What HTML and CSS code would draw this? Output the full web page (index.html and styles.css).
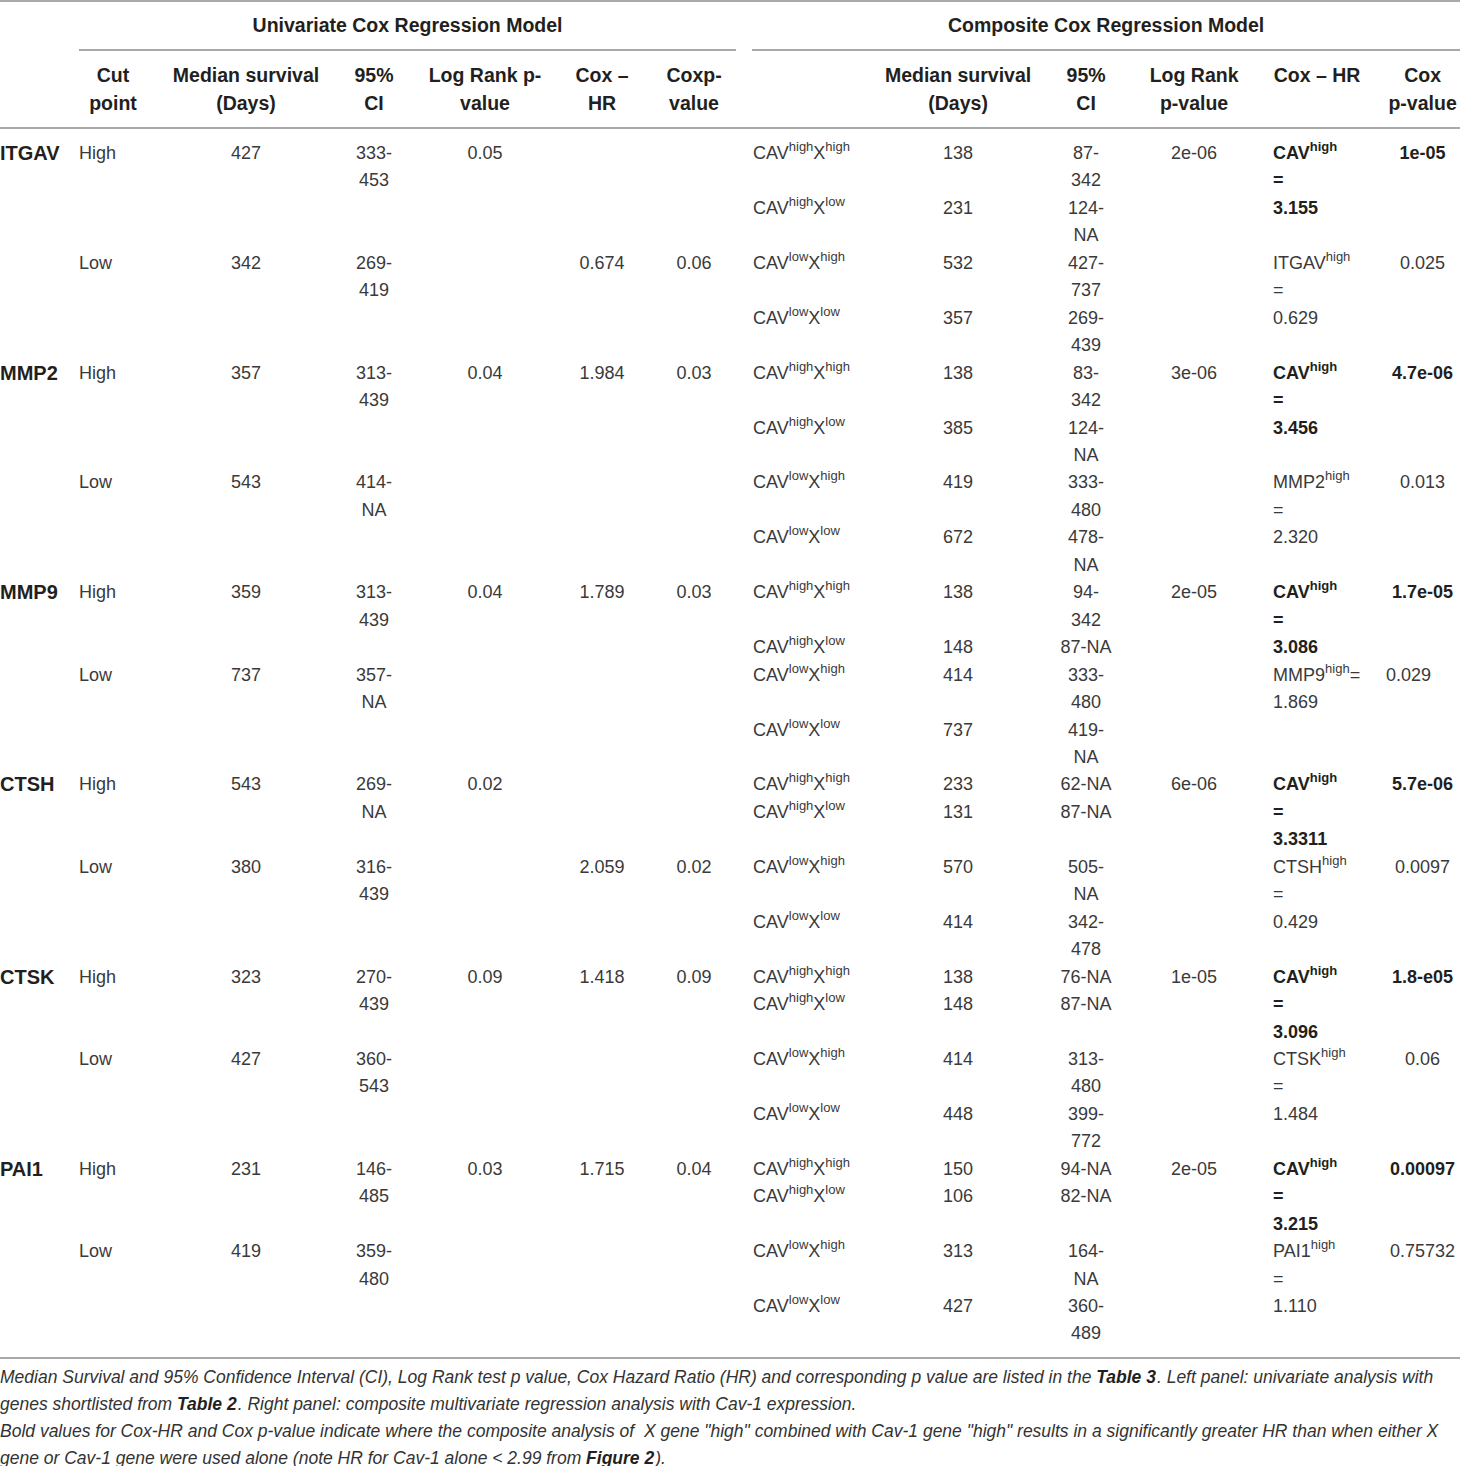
FILE: index.html
```html
<html>
<head>
    <title>Table 3 - Cox Regression Models</title>
    <meta charset="utf-8"
          name="viewport"
          content="width=device-width, initial-scale=1.0" />
    <link rel="stylesheet" href="styles.css">
</head>
<body>
    <table class="results">
        <colgroup>
            <col class="c-gene">
            <col class="c-cut">
            <col class="c-med">
            <col class="c-ci">
            <col class="c-lr">
            <col class="c-hr">
            <col class="c-p">
            <col class="c-name">
            <col class="c-med2">
            <col class="c-ci2">
            <col class="c-lr2">
            <col class="c-hr2">
            <col class="c-p2">
        </colgroup>
        <thead>
            <tr class="group">
                <th></th>
                <th colspan="6"><div class="rule left">Univariate Cox Regression Model</div></th>
                <th colspan="6"><div class="rule right">Composite Cox Regression Model</div></th>
            </tr>
            <tr class="cols">
                <th></th>
                <th>Cut<br>point</th>
                <th>Median survival<br>(Days)</th>
                <th>95%<br>CI</th>
                <th>Log Rank p-<br>value</th>
                <th>Cox –<br>HR</th>
                <th>Coxp-<br>value</th>
                <th></th>
                <th>Median survival<br>(Days)</th>
                <th>95%<br>CI</th>
                <th>Log Rank<br>p-value</th>
                <th>Cox – HR</th>
                <th>Cox<br>p-value</th>
            </tr>
        </thead>
        <tbody>
            <!-- ITGAV -->
            <tr>
                <td class="gene" rowspan="4">ITGAV</td>
                <td class="cut" rowspan="2">High</td>
                <td rowspan="2">427</td>
                <td rowspan="2">333-<br>453</td>
                <td rowspan="2">0.05</td>
                <td rowspan="2"></td>
                <td rowspan="2"></td>
                <td class="name">CAV<sup>high</sup>X<sup>high</sup></td>
                <td>138</td>
                <td>87-<br>342</td>
                <td rowspan="4">2e-06</td>
                <td class="hr strong" rowspan="2">CAV<sup>high</sup><br>=<br>3.155</td>
                <td class="strong" rowspan="2">1e-05</td>
            </tr>
            <tr>
                <td class="name">CAV<sup>high</sup>X<sup>low</sup></td>
                <td>231</td>
                <td>124-<br>NA</td>
            </tr>
            <tr>
                <td class="cut" rowspan="2">Low</td>
                <td rowspan="2">342</td>
                <td rowspan="2">269-<br>419</td>
                <td rowspan="2"></td>
                <td rowspan="2">0.674</td>
                <td rowspan="2">0.06</td>
                <td class="name">CAV<sup>low</sup>X<sup>high</sup></td>
                <td>532</td>
                <td>427-<br>737</td>
                <td class="hr" rowspan="2">ITGAV<sup>high</sup><br>=<br>0.629</td>
                <td rowspan="2">0.025</td>
            </tr>
            <tr>
                <td class="name">CAV<sup>low</sup>X<sup>low</sup></td>
                <td>357</td>
                <td>269-<br>439</td>
            </tr>

            <!-- MMP2 -->
            <tr>
                <td class="gene" rowspan="4">MMP2</td>
                <td class="cut" rowspan="2">High</td>
                <td rowspan="2">357</td>
                <td rowspan="2">313-<br>439</td>
                <td rowspan="2">0.04</td>
                <td rowspan="2">1.984</td>
                <td rowspan="2">0.03</td>
                <td class="name">CAV<sup>high</sup>X<sup>high</sup></td>
                <td>138</td>
                <td>83-<br>342</td>
                <td rowspan="4">3e-06</td>
                <td class="hr strong" rowspan="2">CAV<sup>high</sup><br>=<br>3.456</td>
                <td class="strong" rowspan="2">4.7e-06</td>
            </tr>
            <tr>
                <td class="name">CAV<sup>high</sup>X<sup>low</sup></td>
                <td>385</td>
                <td>124-<br>NA</td>
            </tr>
            <tr>
                <td class="cut" rowspan="2">Low</td>
                <td rowspan="2">543</td>
                <td rowspan="2">414-<br>NA</td>
                <td rowspan="2"></td>
                <td rowspan="2"></td>
                <td rowspan="2"></td>
                <td class="name">CAV<sup>low</sup>X<sup>high</sup></td>
                <td>419</td>
                <td>333-<br>480</td>
                <td class="hr" rowspan="2">MMP2<sup>high</sup><br>=<br>2.320</td>
                <td rowspan="2">0.013</td>
            </tr>
            <tr>
                <td class="name">CAV<sup>low</sup>X<sup>low</sup></td>
                <td>672</td>
                <td>478-<br>NA</td>
            </tr>

            <!-- MMP9 -->
            <tr>
                <td class="gene" rowspan="4">MMP9</td>
                <td class="cut" rowspan="2">High</td>
                <td rowspan="2">359</td>
                <td rowspan="2">313-<br>439</td>
                <td rowspan="2">0.04</td>
                <td rowspan="2">1.789</td>
                <td rowspan="2">0.03</td>
                <td class="name">CAV<sup>high</sup>X<sup>high</sup></td>
                <td>138</td>
                <td>94-<br>342</td>
                <td rowspan="4">2e-05</td>
                <td class="hr strong" rowspan="2">CAV<sup>high</sup><br>=<br>3.086</td>
                <td class="strong" rowspan="2">1.7e-05</td>
            </tr>
            <tr>
                <td class="name">CAV<sup>high</sup>X<sup>low</sup></td>
                <td>148</td>
                <td>87-NA</td>
            </tr>
            <tr>
                <td class="cut" rowspan="2">Low</td>
                <td rowspan="2">737</td>
                <td rowspan="2">357-<br>NA</td>
                <td rowspan="2"></td>
                <td rowspan="2"></td>
                <td rowspan="2"></td>
                <td class="name">CAV<sup>low</sup>X<sup>high</sup></td>
                <td>414</td>
                <td>333-<br>480</td>
                <td class="hr" rowspan="2">MMP9<sup>high</sup>=<br>1.869</td>
                <td class="shift" rowspan="2">0.029</td>
            </tr>
            <tr>
                <td class="name">CAV<sup>low</sup>X<sup>low</sup></td>
                <td>737</td>
                <td>419-<br>NA</td>
            </tr>

            <!-- CTSH -->
            <tr>
                <td class="gene" rowspan="4">CTSH</td>
                <td class="cut" rowspan="2">High</td>
                <td rowspan="2">543</td>
                <td rowspan="2">269-<br>NA</td>
                <td rowspan="2">0.02</td>
                <td rowspan="2"></td>
                <td rowspan="2"></td>
                <td class="name">CAV<sup>high</sup>X<sup>high</sup></td>
                <td>233</td>
                <td>62-NA</td>
                <td rowspan="4">6e-06</td>
                <td class="hr strong" rowspan="2">CAV<sup>high</sup><br>=<br>3.3311</td>
                <td class="strong" rowspan="2">5.7e-06</td>
            </tr>
            <tr class="tall">
                <td class="name">CAV<sup>high</sup>X<sup>low</sup></td>
                <td>131</td>
                <td>87-NA</td>
            </tr>
            <tr>
                <td class="cut" rowspan="2">Low</td>
                <td rowspan="2">380</td>
                <td rowspan="2">316-<br>439</td>
                <td rowspan="2"></td>
                <td rowspan="2">2.059</td>
                <td rowspan="2">0.02</td>
                <td class="name">CAV<sup>low</sup>X<sup>high</sup></td>
                <td>570</td>
                <td>505-<br>NA</td>
                <td class="hr" rowspan="2">CTSH<sup>high</sup><br>=<br>0.429</td>
                <td rowspan="2">0.0097</td>
            </tr>
            <tr>
                <td class="name">CAV<sup>low</sup>X<sup>low</sup></td>
                <td>414</td>
                <td>342-<br>478</td>
            </tr>

            <!-- CTSK -->
            <tr>
                <td class="gene" rowspan="4">CTSK</td>
                <td class="cut" rowspan="2">High</td>
                <td rowspan="2">323</td>
                <td rowspan="2">270-<br>439</td>
                <td rowspan="2">0.09</td>
                <td rowspan="2">1.418</td>
                <td rowspan="2">0.09</td>
                <td class="name">CAV<sup>high</sup>X<sup>high</sup></td>
                <td>138</td>
                <td>76-NA</td>
                <td rowspan="4">1e-05</td>
                <td class="hr strong" rowspan="2">CAV<sup>high</sup><br>=<br>3.096</td>
                <td class="strong" rowspan="2">1.8-e05</td>
            </tr>
            <tr class="tall">
                <td class="name">CAV<sup>high</sup>X<sup>low</sup></td>
                <td>148</td>
                <td>87-NA</td>
            </tr>
            <tr>
                <td class="cut" rowspan="2">Low</td>
                <td rowspan="2">427</td>
                <td rowspan="2">360-<br>543</td>
                <td rowspan="2"></td>
                <td rowspan="2"></td>
                <td rowspan="2"></td>
                <td class="name">CAV<sup>low</sup>X<sup>high</sup></td>
                <td>414</td>
                <td>313-<br>480</td>
                <td class="hr" rowspan="2">CTSK<sup>high</sup><br>=<br>1.484</td>
                <td rowspan="2">0.06</td>
            </tr>
            <tr>
                <td class="name">CAV<sup>low</sup>X<sup>low</sup></td>
                <td>448</td>
                <td>399-<br>772</td>
            </tr>

            <!-- PAI1 -->
            <tr>
                <td class="gene" rowspan="4">PAI1</td>
                <td class="cut" rowspan="2">High</td>
                <td rowspan="2">231</td>
                <td rowspan="2">146-<br>485</td>
                <td rowspan="2">0.03</td>
                <td rowspan="2">1.715</td>
                <td rowspan="2">0.04</td>
                <td class="name">CAV<sup>high</sup>X<sup>high</sup></td>
                <td>150</td>
                <td>94-NA</td>
                <td rowspan="4">2e-05</td>
                <td class="hr strong" rowspan="2">CAV<sup>high</sup><br>=<br>3.215</td>
                <td class="strong" rowspan="2">0.00097</td>
            </tr>
            <tr class="tall">
                <td class="name">CAV<sup>high</sup>X<sup>low</sup></td>
                <td>106</td>
                <td>82-NA</td>
            </tr>
            <tr>
                <td class="cut" rowspan="2">Low</td>
                <td rowspan="2">419</td>
                <td rowspan="2">359-<br>480</td>
                <td rowspan="2"></td>
                <td rowspan="2"></td>
                <td rowspan="2"></td>
                <td class="name">CAV<sup>low</sup>X<sup>high</sup></td>
                <td>313</td>
                <td>164-<br>NA</td>
                <td class="hr" rowspan="2">PAI1<sup>high</sup><br>=<br>1.110</td>
                <td rowspan="2">0.75732</td>
            </tr>
            <tr>
                <td class="name">CAV<sup>low</sup>X<sup>low</sup></td>
                <td>427</td>
                <td>360-<br>489</td>
            </tr>
        </tbody>
    </table>

    <div class="notes">
        <p>Median Survival and 95% Confidence Interval (CI), Log Rank test p value, Cox Hazard Ratio (HR) and corresponding p value are listed in the <b>Table 3</b>. Left panel: univariate analysis with genes shortlisted from <b>Table 2</b>. Right panel: composite multivariate regression analysis with Cav-1 expression.</p>
        <p>Bold values for Cox-HR and Cox p-value indicate where the composite analysis of &nbsp;X gene "high" combined with Cav-1 gene "high" results in a significantly greater HR than when either X gene or Cav-1 gene were used alone (note HR for Cav-1 alone &lt; 2.99 from <b>Figure 2</b>).</p>
    </div>
</body>
</html>
```

FILE: styles.css
```css
/* Reset default spacing */
body, table, p {
    margin: 0;
    padding: 0;
}

body {
    font-family: "Liberation Sans", Arial, sans-serif;
    color: #3a3a3a;
    background-color: #fff;
    overflow: hidden;
}

.results {
    width: 1460px;
    table-layout: fixed;
    border-collapse: separate;
    border-spacing: 0;
    border-top: 2px solid #a9a9a9;
    border-bottom: 2px solid #a9a9a9;
    padding-bottom: 9px;
}

/* column widths */
.c-gene { width: 79px; }
.c-cut  { width: 68px; }
.c-med  { width: 198px; }
.c-ci   { width: 58px; }
.c-lr   { width: 164px; }
.c-hr   { width: 70px; }
.c-p    { width: 114px; }
.c-name { width: 132px; }
.c-med2 { width: 150px; }
.c-ci2  { width: 106px; }
.c-lr2  { width: 110px; }
.c-hr2  { width: 136px; }
.c-p2   { width: 75px; }

/* header */
th {
    font-size: 19.5px;
    font-weight: bold;
    line-height: 28px;
    color: #231f20;
    text-align: center;
    vertical-align: top;
    white-space: nowrap;
}

.group th {
    padding: 0;
}

.group .rule {
    padding: 9px 0 10px;
    border-bottom: 2px solid #a9a9a9;
}

.group .left {
    margin-right: 15px;
}

.group .right {
    margin-left: 1px;
}

.cols th {
    padding: 10px 0;
    border-bottom: 2px solid #a9a9a9;
}

/* body cells */
td {
    padding: 0;
    font-size: 18px;
    line-height: 27.45px;
    text-align: center;
    vertical-align: top;
    white-space: nowrap;
}

tbody tr:first-child td {
    padding-top: 11px;
}

tr.tall td {
    height: 54.9px;
}

td.gene {
    text-align: left;
    font-size: 20px;
    font-weight: bold;
    color: #231f20;
}

td.cut {
    text-align: left;
}

td.name {
    text-align: left;
    padding-left: 2px;
}

td.hr {
    text-align: left;
    padding-left: 24px;
}

td.shift {
    text-align: left;
    padding-left: 1px;
}

.strong {
    font-weight: bold;
    color: #231f20;
}

sup {
    font-size: 13px;
    line-height: 0;
    vertical-align: 8px;
}

/* table footnotes */
.notes {
    margin-top: 5px;
    font-size: 17.5px;
    font-style: italic;
    line-height: 27px;
    color: #333;
}

.notes b {
    color: #231f20;
    padding-right: 1px;
}
```
